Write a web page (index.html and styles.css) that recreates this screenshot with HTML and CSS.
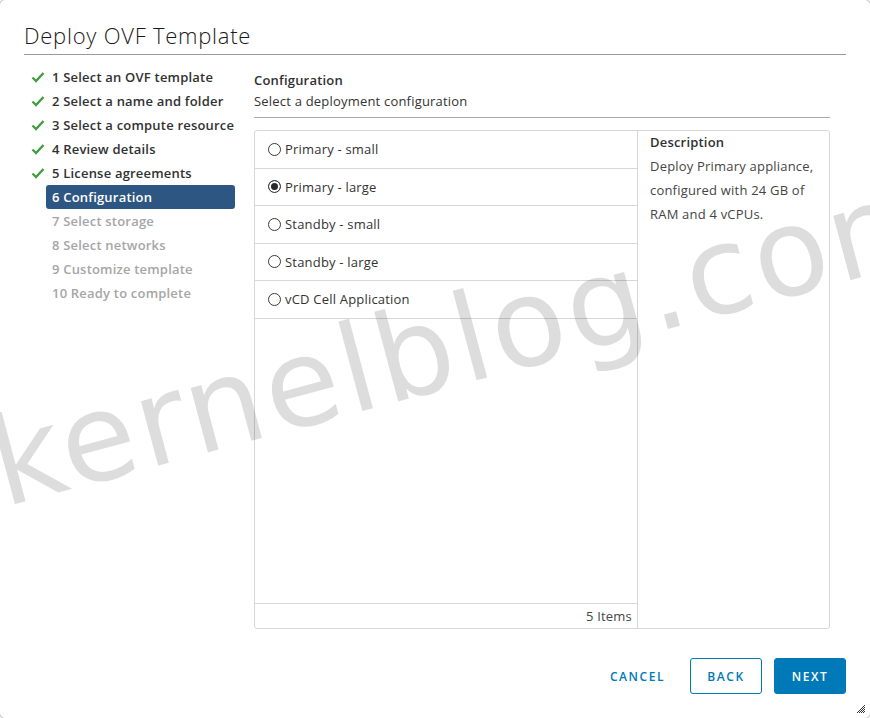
FILE: index.html
```html
<!DOCTYPE html>
<html lang="en">
<head>
  <meta charset="UTF-8" />
  <title>Deploy OVF Template</title>
  <link rel="stylesheet" href="styles.css">
</head>
<body>

  <div class="dialog">
    <h1 class="title">Deploy OVF Template</h1>

    <div class="wizard">
      <ul class="steps">
        <li class="done"><svg class="check" viewBox="0 0 14 14"><path d="M1.5 7.5 L5 11 L12.5 3" /></svg>1 Select an OVF template</li>
        <li class="done"><svg class="check" viewBox="0 0 14 14"><path d="M1.5 7.5 L5 11 L12.5 3" /></svg>2 Select a name and folder</li>
        <li class="done"><svg class="check" viewBox="0 0 14 14"><path d="M1.5 7.5 L5 11 L12.5 3" /></svg>3 Select a compute resource</li>
        <li class="done"><svg class="check" viewBox="0 0 14 14"><path d="M1.5 7.5 L5 11 L12.5 3" /></svg>4 Review details</li>
        <li class="done"><svg class="check" viewBox="0 0 14 14"><path d="M1.5 7.5 L5 11 L12.5 3" /></svg>5 License agreements</li>
        <li class="active">6 Configuration</li>
        <li class="todo">7 Select storage</li>
        <li class="todo">8 Select networks</li>
        <li class="todo">9 Customize template</li>
        <li class="todo">10 Ready to complete</li>
      </ul>

      <div class="content">
        <div class="page-head">
          <div class="page-title">Configuration</div>
          <div class="page-sub">Select a deployment configuration</div>
        </div>

        <div class="config">
          <div class="options">
            <div class="rows">
              <div class="row"><span class="radio"></span>Primary - small</div>
              <div class="row"><span class="radio checked"></span>Primary - large</div>
              <div class="row"><span class="radio"></span>Standby - small</div>
              <div class="row"><span class="radio"></span>Standby - large</div>
              <div class="row"><span class="radio"></span>vCD Cell Application</div>
            </div>
            <div class="options-footer">5 Items</div>
          </div>
          <div class="desc">
            <div class="desc-title">Description</div>
            <p>Deploy Primary appliance, configured with 24 GB of RAM and 4 vCPUs.</p>
          </div>
        </div>
      </div>
    </div>

    <div class="actions">
      <button class="btn btn-link">Cancel</button>
      <button class="btn btn-outline">Back</button>
      <button class="btn btn-primary">Next</button>
    </div>

    <div class="watermark">kernelblog.com</div>

    <svg class="resize" viewBox="0 0 10 10">
      <path d="M1 9 L9 1 M3 9 L9 3 M5 9 L9 5 M7 9 L9 7" />
    </svg>
  </div>

</body>
</html>
```

FILE: styles.css
```css
body {
  margin: 0;
  background-color: #ffffff;
  font-family: 'Open Sans', sans-serif;
  color: #313131;
  letter-spacing: 0.2px;
  overflow: hidden;
}

.dialog {
  position: relative;
  width: 870px;
  height: 718px;
  margin: -1px;
  border: 1px solid #b8b8b8;
  border-radius: 6px;
  background-color: #ffffff;
  display: flex;
  flex-direction: column;
  overflow: hidden;
}

.title {
  margin: 0 24px;
  padding: 18px 0 1px;
  line-height: 35px;
  font-size: 22px;
  font-weight: 300;
  letter-spacing: 0.75px;
  color: #1a1a1a;
  border-bottom: 1px solid #9a9a9a;
}

.wizard {
  display: flex;
  padding: 10px 24px 0;
  flex: 1;
}

/* left step list */
.steps {
  list-style: none;
  margin: 0;
  padding: 0 0 0 22px;
  width: 189px;
  margin-right: 19px;
}

.steps li {
  display: flex;
  align-items: center;
  height: 24px;
  padding-left: 6px;
  font-size: 13px;
  font-weight: 600;
  border-radius: 3px;
  white-space: nowrap;
}

.steps .check {
  width: 14px;
  height: 14px;
  margin-left: -21px;
  margin-right: 7px;
  fill: none;
  stroke: #3f9e3f;
  stroke-width: 2.3;
}

.steps .done {
  color: #313131;
}

.steps .active {
  background-color: #2d5782;
  color: #ffffff;
}

.steps .todo {
  color: #a6a6a6;
}

/* right content */
.content {
  flex: 1;
  margin-right: 16px;
  display: flex;
  flex-direction: column;
}

.page-head {
  padding-top: 5px;
  padding-bottom: 5px;
  border-bottom: 1px solid #a8a8a8;
}

.page-title {
  font-size: 13px;
  font-weight: 600;
  line-height: 20px;
}

.page-sub {
  font-size: 13px;
  line-height: 21px;
  margin-top: 1px;
  color: #333333;
}

.config {
  display: flex;
  margin-top: 12px;
  height: 499px;
  box-sizing: border-box;
  border: 1px solid #d7d7d7;
  border-radius: 3px;
}

.options {
  width: 382px;
  border-right: 1px solid #d7d7d7;
  display: flex;
  flex-direction: column;
}

.rows {
  flex: 1;
}

.row {
  display: flex;
  align-items: center;
  height: 36.5px;
  padding-left: 13px;
  border-bottom: 1px solid #d7d7d7;
  font-size: 13px;
  color: #333333;
}

.radio {
  width: 11px;
  height: 11px;
  margin-right: 4px;
  border: 1px solid #3a3a3a;
  border-radius: 50%;
  background-color: #ffffff;
}

.radio.checked {
  background-color: #2a2a2a;
  box-shadow: inset 0 0 0 2px #ffffff;
}

.options-footer {
  height: 24px;
  line-height: 24px;
  border-top: 1px solid #d7d7d7;
  text-align: right;
  padding-right: 5px;
  font-size: 13px;
  color: #454545;
}

.desc {
  flex: 1;
  padding: 0 12px;
}

.desc-title {
  font-size: 13px;
  font-weight: 600;
  line-height: 23px;
  color: #313131;
}

.desc p {
  margin: 0;
  font-size: 13px;
  line-height: 24px;
  color: #454545;
}

/* footer buttons */
.actions {
  display: flex;
  justify-content: flex-end;
  padding: 0 24px 24px;
}

.btn {
  min-width: 72px;
  height: 36px;
  padding: 0 12px;
  margin-left: 12px;
  border: 1px solid transparent;
  border-radius: 3px;
  font-family: 'Open Sans', sans-serif;
  font-size: 12px;
  font-weight: 600;
  letter-spacing: 0.13em;
  text-transform: uppercase;
  cursor: pointer;
}

.btn-link {
  background: none;
  color: #0079b8;
}

.btn-outline {
  background-color: #ffffff;
  border-color: #0079b8;
  color: #0079b8;
}

.btn-primary {
  background-color: #0079b8;
  border-color: #0079b8;
  color: #ffffff;
}

.watermark {
  position: absolute;
  left: 4px;
  top: 405px;
  font-family: 'DejaVu Sans', sans-serif;
  font-size: 122px;
  line-height: 120px;
  letter-spacing: 3.5px;
  color: rgba(0, 0, 0, 0.135);
  white-space: nowrap;
  transform-origin: 0 101px;
  transform: rotate(-15deg);
  pointer-events: none;
}

.resize {
  position: absolute;
  right: 4px;
  bottom: 4px;
  width: 10px;
  height: 10px;
  stroke: #333333;
  stroke-width: 1;
}
```
